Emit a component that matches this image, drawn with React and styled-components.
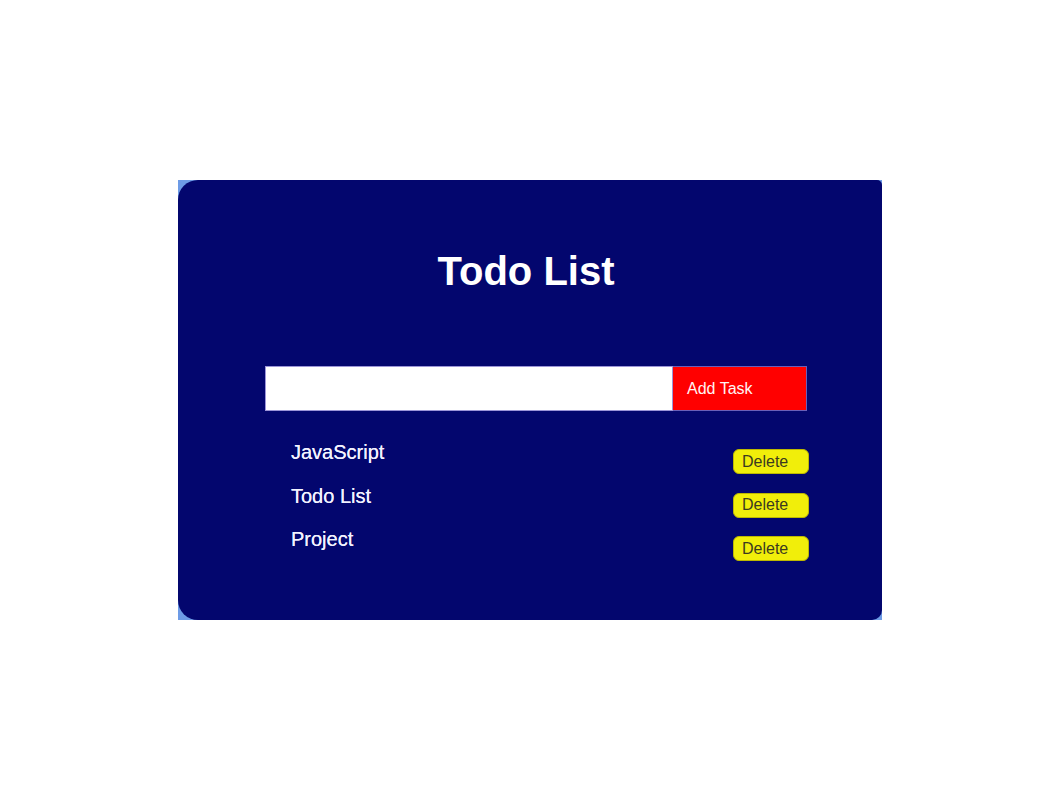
import React, { useState } from 'react';
import styled, { createGlobalStyle } from 'styled-components';

const GlobalStyle = createGlobalStyle`
  body {
    margin: 0;
    background: #ffffff;
    font-family: "Liberation Sans", Arial, sans-serif;
  }
`;

const Page = styled.div`
  width: 100vw;
  height: 100vh;
  display: flex;
  align-items: center;
  justify-content: center;
`;

const Backdrop = styled.div`
  width: 704px;
  height: 440px;
  background-color: #6d9be6;
`;

const Card = styled.div`
  box-sizing: border-box;
  width: 100%;
  height: 100%;
  background-color: #03066e;
  border-radius: 20px 5px 10px 20px;
  padding-top: 68px;
  display: flex;
  flex-direction: column;
`;

const Title = styled.h1`
  margin: 0 0 0 -8px;
  text-align: center;
  color: #ffffff;
  font-size: 40px;
  line-height: 46px;
  font-weight: 700;
`;

const Form = styled.form`
  display: flex;
  margin: 72px 0 0 87px;
  width: 542px;
  height: 45px;
`;

const TaskInput = styled.input`
  box-sizing: border-box;
  flex: 1;
  height: 100%;
  border: 1px solid #9c95d8;
  background: #ffffff;
  outline: none;
  font-size: 16px;
  padding: 0 10px;
`;

const AddButton = styled.button`
  box-sizing: border-box;
  width: 134px;
  height: 100%;
  border: 1px solid #6a5fb8;
  border-left: none;
  background-color: #ff0000;
  color: #fff4f4;
  font-family: inherit;
  font-size: 16px;
  text-align: left;
  padding: 0 0 0 14px;
  cursor: pointer;
`;

const List = styled.ul`
  list-style: none;
  margin: 30px 0 0 87px;
  padding: 0 0 0 26px;
  width: 518px;
  display: flex;
  flex-direction: column;
  gap: 10.5px;
`;

const Row = styled.li`
  display: flex;
  justify-content: space-between;
  align-items: flex-start;
  min-height: 33px;
`;

const Label = styled.span`
  color: #f2f2ff;
  font-size: 20px;
  line-height: 23px;
  text-shadow: 0 0 0.4px #f2f2ff;
`;

const DeleteButton = styled.button`
  margin-top: 8px;
  width: 76px;
  height: 25px;
  border: 1px solid #bdb800;
  border-radius: 6px;
  background-color: #f1ee0a;
  color: #3b3a20;
  font-family: inherit;
  font-size: 16px;
  text-align: left;
  padding: 0 0 0 8px;
  cursor: pointer;
`;

export default function App() {
  const [tasks, setTasks] = useState(['JavaScript', 'Todo List', 'Project']);
  const [value, setValue] = useState('');

  const addTask = e => {
    e.preventDefault();
    if (!value.trim()) return;
    setTasks([...tasks, value.trim()]);
    setValue('');
  };

  return (
    <Page>
      <GlobalStyle />
      <Backdrop>
        <Card>
          <Title>Todo List</Title>
          <Form onSubmit={addTask}>
            <TaskInput value={value} onChange={e => setValue(e.target.value)} />
            <AddButton type="submit">Add Task</AddButton>
          </Form>
          <List>
            {tasks.map((task, i) => (
              <Row key={task + i}>
                <Label>{task}</Label>
                <DeleteButton
                  type="button"
                  onClick={() => setTasks(tasks.filter((_, j) => j !== i))}
                >
                  Delete
                </DeleteButton>
              </Row>
            ))}
          </List>
        </Card>
      </Backdrop>
    </Page>
  );
}
